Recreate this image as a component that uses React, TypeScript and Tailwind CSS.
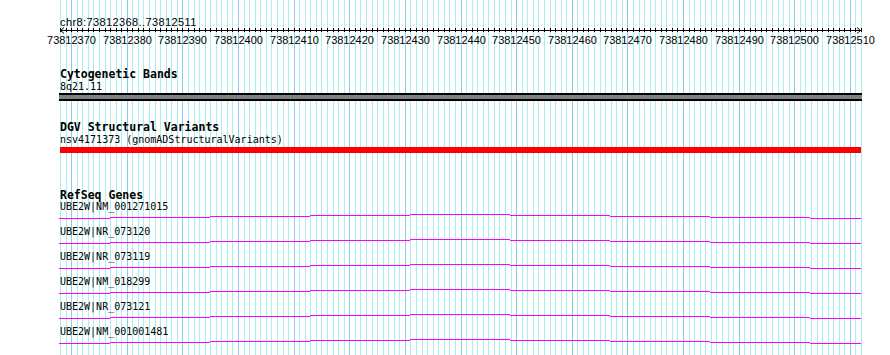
import React from "react";

const START = 73812368;
const END = 73812511;
const LEFT = 60;
const BP = 5.5625;
const positions = Array.from({ length: END - START + 2 }, (_, i) => i);
const xAt = (i: number) => Math.round(LEFT + i * BP);

const genes = [
  "UBE2W|NM_001271015",
  "UBE2W|NR_073120",
  "UBE2W|NR_073119",
  "UBE2W|NM_018299",
  "UBE2W|NR_073121",
  "UBE2W|NM_001001481",
];

// the transcript line is drawn in 100px tiles, each one a pixel off the next
const steps: [number, number, number][] = [
  [59, 110, 4],
  [110, 210, 3],
  [210, 310, 2],
  [310, 410, 1],
  [410, 510, 0],
  [510, 610, 1],
  [610, 710, 2],
  [710, 810, 3],
  [810, 861, 4],
];

function Grid() {
  return (
    <svg
      className="absolute inset-0"
      width={890}
      height={355}
      shapeRendering="crispEdges"
    >
      {positions.map((i) => (
        <rect
          key={i}
          x={xAt(i)}
          y={0}
          width={1}
          height={355}
          fill={(START + i) % 10 === 0 ? "#8ccaee" : "#aaeeee"}
        />
      ))}
    </svg>
  );
}

function Ruler() {
  const labels = positions.filter((i) => (START + i) % 10 === 0);
  return (
    <svg width={890} height={22} className="block">
      <g shapeRendering="crispEdges">
        <rect x={60} y={4} width={801} height={1} fill="#000" />
        {positions.map((i) => (
          <rect key={i} x={xAt(i)} y={2} width={1} height={4} fill="#000" />
        ))}
      </g>
      <polyline points="64,1.5 60.5,4.5 64,7.5" fill="none" stroke="#000" />
      <polyline points="857,1.5 860.5,4.5 857,7.5" fill="none" stroke="#000" />
      {labels.map((i) => (
        <text
          key={i}
          x={xAt(i) + 0.5}
          y={18}
          textAnchor="middle"
          fontFamily="'Liberation Sans', Arial, sans-serif"
          fontSize={11}
          fill="#000"
        >
          {START + i}
        </text>
      ))}
    </svg>
  );
}

function GeneRow({ name }: { name: string }) {
  return (
    <div>
      <div className="pl-[60px] text-[10px] leading-[12px]">{name}</div>
      <svg width={890} height={13} className="block" shapeRendering="crispEdges">
        {steps.map(([a, b, o]) => (
          <rect key={a} x={a} y={1 + o} width={b - a} height={1} fill="#ff00ff" />
        ))}
      </svg>
    </div>
  );
}

export default function App() {
  return (
    <div className="relative h-[355px] w-[890px] overflow-hidden bg-white text-black">
      <Grid />
      <div className="relative font-['DejaVu_Sans_Mono',monospace]">
        <div className="h-[26px] pt-[18px] pl-[60px] font-['Liberation_Sans',Arial,sans-serif] text-[11px] leading-[8px] tracking-[0.4px]">
          chr8:73812368..73812511
        </div>
        <Ruler />

        <section>
          <h2 className="mt-[20px] pl-[60px] text-[11.5px] font-bold leading-[13px]">
            Cytogenetic Bands
          </h2>
          <p className="pl-[60px] text-[10px] leading-[11px]">8q21.11</p>
          <div className="ml-[59px] mt-[1px] h-[8px] w-[803px] border-y-2 border-black bg-[#808080]" />
        </section>

        <section>
          <h2 className="mt-[20px] pl-[60px] text-[11.5px] font-bold leading-[13px]">
            DGV Structural Variants
          </h2>
          <p className="pl-[60px] text-[10px] leading-[12px]">
            nsv4171373 (gnomADStructuralVariants)
          </p>
          <div className="ml-[60px] mt-[1px] h-[6px] w-[801px] bg-[#ff0000]" />
        </section>

        <section>
          <h2 className="mt-[37px] pl-[60px] text-[11.5px] font-bold leading-[11px]">
            RefSeq Genes
          </h2>
          {genes.map((g) => (
            <GeneRow key={g} name={g} />
          ))}
        </section>
      </div>
    </div>
  );
}
